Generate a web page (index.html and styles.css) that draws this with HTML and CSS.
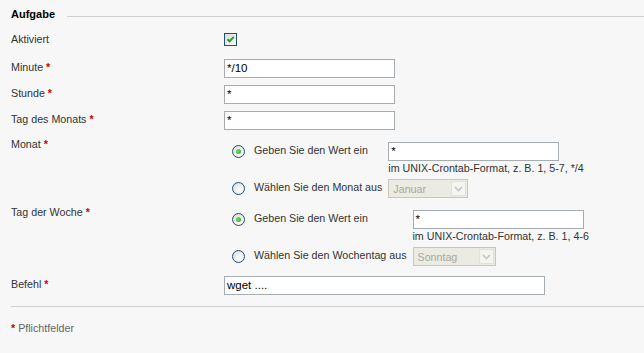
FILE: index.html
```html
<!DOCTYPE html>
<html lang="de">
<head>
<meta charset="utf-8">
<title>Aufgabe</title>
<link rel="stylesheet" href="styles.css">
</head>
<body>
<div class="page">
  <div class="legend"><span class="legend-text">Aufgabe</span><span class="legend-line"></span></div>

  <div class="row row-check">
    <div class="label">Aktiviert</div>
    <div class="field">
      <span class="checkbox"><svg width="11" height="11" viewBox="0 0 11 11"><path d="M2.5 5.2 L4.6 7.4 L8.8 2.8" fill="none" stroke="#21a121" stroke-width="2"/></svg></span>
    </div>
  </div>

  <div class="row row-text">
    <div class="label">Minute <span class="req">*</span></div>
    <div class="field"><span class="input w171">*/10</span></div>
  </div>
  <div class="row row-text">
    <div class="label">Stunde <span class="req">*</span></div>
    <div class="field"><span class="input w171">*</span></div>
  </div>
  <div class="row row-text">
    <div class="label">Tag des Monats <span class="req">*</span></div>
    <div class="field"><span class="input w171">*</span></div>
  </div>

  <div class="row row-group">
    <div class="label">Monat <span class="req">*</span></div>
    <div class="field">
      <div class="choice">
        <span class="radio checked"><span class="dot"></span></span>
        <span class="opt">Geben Sie den Wert ein</span>
        <div class="ctrl"><span class="input w171">*</span></div>
        <div class="hint">im UNIX-Crontab-Format, z. B. 1, 5-7, */4</div>
        <span class="radio second"></span>
        <span class="opt second">Wählen Sie den Monat aus</span>
        <div class="ctrl second"><span class="select w80"><span class="sel-text">Januar</span><span class="sel-btn"><svg width="9" height="6" viewBox="0 0 9 6"><path d="M1 1 L4.5 4.5 L8 1" fill="none" stroke="#c2c6cc" stroke-width="1.6"/></svg></span></span></div>
      </div>
    </div>
  </div>

  <div class="row row-group">
    <div class="label">Tag der Woche <span class="req">*</span></div>
    <div class="field">
      <div class="choice">
        <span class="radio checked"><span class="dot"></span></span>
        <span class="opt">Geben Sie den Wert ein</span>
        <div class="ctrl"><span class="input w171">*</span></div>
        <div class="hint">im UNIX-Crontab-Format, z. B. 1, 4-6</div>
        <span class="radio second"></span>
        <span class="opt second">Wählen Sie den Wochentag aus</span>
        <div class="ctrl second"><span class="select w83"><span class="sel-text">Sonntag</span><span class="sel-btn"><svg width="9" height="6" viewBox="0 0 9 6"><path d="M1 1 L4.5 4.5 L8 1" fill="none" stroke="#c2c6cc" stroke-width="1.6"/></svg></span></span></div>
      </div>
    </div>
  </div>

  <div class="row row-cmd">
    <div class="label">Befehl <span class="req">*</span></div>
    <div class="field"><span class="input w321">wget ....</span></div>
  </div>

  <div class="divider"></div>
  <div class="footnote"><span class="req">*</span> Pflichtfelder</div>
</div>
</body>
</html>
```

FILE: styles.css
```css
html, body {
  margin: 0;
  padding: 0;
  background: #f7f7f7;
}
body {
  font-family: "Liberation Sans", Arial, sans-serif;
  font-size: 10.7px;
  line-height: 13px;
  color: #333;
}
.page {
  padding: 8px 0 0 11px;
}
.legend {
  display: flex;
  align-items: flex-start;
  height: 13px;
}
.legend-text {
  font-weight: bold;
  font-size: 11px;
  color: #000;
  padding-right: 12px;
}
.legend-line {
  flex: 1;
  height: 1px;
  background: #d0d0d0;
  margin-top: 8px;
}
.row {
  display: grid;
  grid-template-columns: 213px 1fr;
}
.row-check { margin-top: 12px; }
.row-text { margin-top: 7px; }
.row-check + .row-text { margin-top: 13px; }
.row-text .label, .row-cmd .label { padding-top: 2px; }
.row-group { margin-top: 8px; }
.row-group + .row-group { margin-top: 8px; }
.row-group .field { padding-top: 4px; }
.row-cmd { margin-top: 10px; }
.req { color: #cc0000; font-weight: bold; }
.checkbox {
  display: block;
  width: 11px;
  height: 11px;
  border: 1px solid #1c5180;
  background: linear-gradient(135deg, #dcdcd7, #fbfbf9);
}
.checkbox svg { display: block; }
.input {
  display: block;
  box-sizing: border-box;
  height: 19px;
  border: 1px solid #a5acb2;
  background: #fff;
  color: #000;
  padding: 2px 2px 0 2px;
  line-height: 13px;
  font-size: 11.5px;
}
.w171 { width: 171px; }
.w321 { width: 321px; }
.choice {
  display: grid;
  grid-template-columns: 8px 13px 9px auto 6px auto;
  grid-template-rows: 19px 13px 24px;
  justify-content: start;
}
.radio {
  grid-column: 2;
  grid-row: 1;
  margin-top: 3px;
  box-sizing: border-box;
  width: 13px;
  height: 13px;
  border: 1px solid #1c5180;
  border-radius: 50%;
  background: radial-gradient(circle at 65% 65%, #ffffff 0%, #e8e8e3 60%, #cfcfc8 100%);
  display: flex;
  align-items: center;
  justify-content: center;
}
.radio .dot {
  width: 5px;
  height: 5px;
  border-radius: 50%;
  background: radial-gradient(circle at 40% 40%, #6fe06f, #21a121);
}
.opt {
  grid-column: 4;
  grid-row: 1;
  padding-top: 2px;
  white-space: nowrap;
}
.ctrl {
  grid-column: 6;
  grid-row: 1;
}
.hint {
  grid-column: 6;
  grid-row: 2;
  padding-top: 1px;
  white-space: nowrap;
}
.radio.second, .opt.second, .ctrl.second { grid-row: 3; }
.ctrl.second { margin-top: 5px; }
.radio.second { margin-top: 8px; }
.opt.second { padding-top: 7px; }
.select {
  display: flex;
  box-sizing: border-box;
  height: 19px;
  border: 1px solid #c9c7ba;
  background: #ebebe4;
  color: #aca899;
  padding: 1px;
}
.w80 { width: 80px; }
.w83 { width: 83px; }
.sel-text {
  flex: 1;
  padding: 2px 0 0 3px;
  line-height: 12px;
}
.sel-btn {
  width: 15px;
  box-sizing: border-box;
  border: 1px solid #e1e1dc;
  background: #f4f4f0;
  display: flex;
  align-items: center;
  justify-content: center;
}
.sel-btn svg { display: block; }
.divider {
  margin-top: 11px;
  height: 1px;
  background: #d0d0d0;
}
.footnote {
  margin-top: 15px;
  color: #666;
}
```
